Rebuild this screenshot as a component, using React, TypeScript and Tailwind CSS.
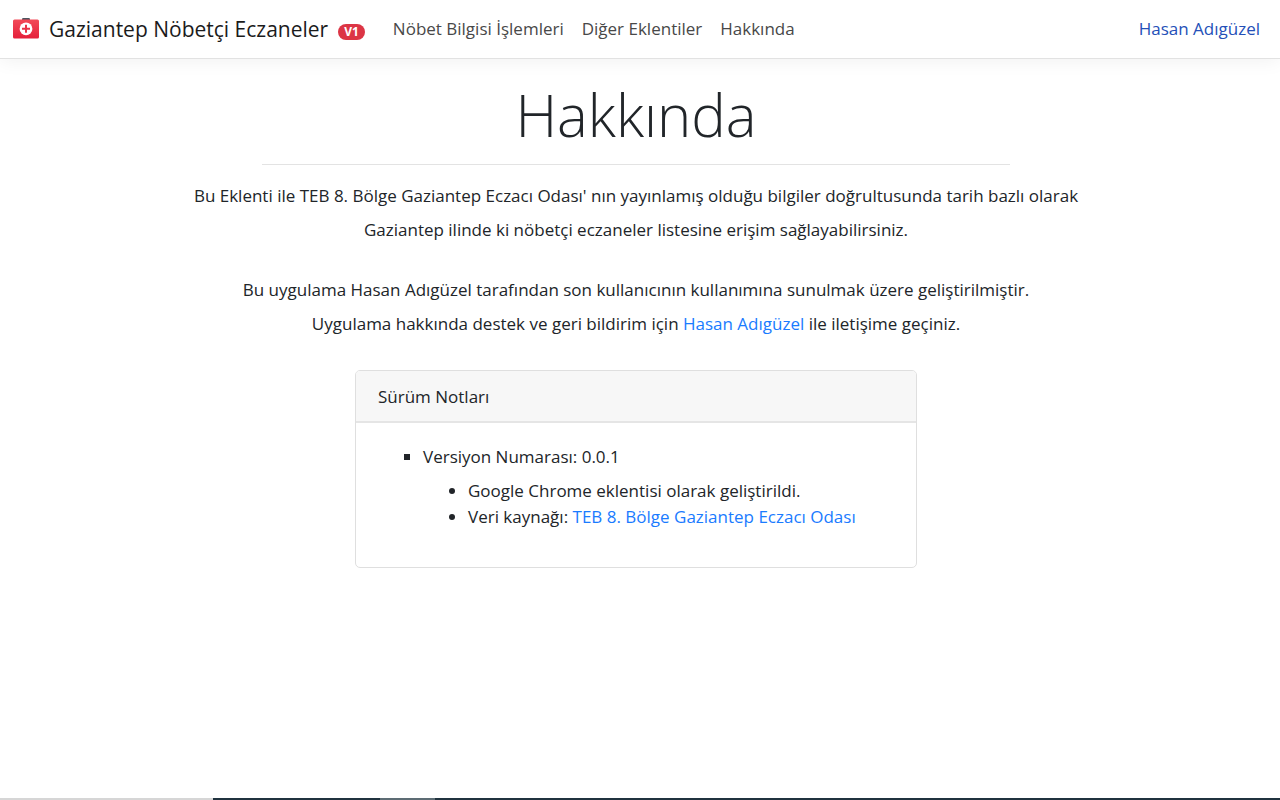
const NAV_LINKS = ['Nöbet Bilgisi İşlemleri', 'Diğer Eklentiler', 'Hakkında'];

const RELEASE = {
  version: '0.0.1',
  source: 'TEB 8. Bölge Gaziantep Eczacı Odası',
};

function FirstAidIcon() {
  return (
    <svg className="-mt-1 h-6 w-7 shrink-0" viewBox="0 0 28 24" aria-hidden="true">
      <defs>
        <linearGradient id="case" x1="0" y1="0" x2="0" y2="1">
          <stop offset="0" stopColor="#f24a58" />
          <stop offset="1" stopColor="#e5203a" />
        </linearGradient>
      </defs>
      <path d="M10 4.5V3.2Q10 2 11.2 2h5.6Q18 2 18 3.2v1.3z" fill="#4d5560" />
      <rect x="1" y="3.5" width="26" height="19" rx="1.5" fill="url(#case)" />
      <circle cx="14" cy="12.8" r="6.4" fill="#fff" />
      <path d="M14 8.8v8M10 12.8h8" stroke="#e93448" strokeWidth="2" />
    </svg>
  );
}

function Navbar() {
  return (
    <nav className="flex h-[59px] items-center border-b border-[#e2e2e2] bg-white pr-5 pl-3 shadow-[0_2px_18px_rgba(0,0,0,0.06)]">
      <a href="#" className="flex items-center pt-[2px] text-[21px] text-[#1b1b1b]">
        <FirstAidIcon />
        <span className="ml-[9px]">Gaziantep Nöbetçi Eczaneler</span>
        <span className="mt-1 ml-[10px] rounded-full bg-[#dc3545] px-[6px] text-[12px] leading-4 font-bold text-white">
          V1
        </span>
      </a>
      <div className="ml-7 flex gap-[18px] text-[#484848]">
        {NAV_LINKS.map(link => (
          <a key={link} href="#">{link}</a>
        ))}
      </div>
      <a href="#" className="ml-auto text-[#2450b8]">Hasan Adıgüzel</a>
    </nav>
  );
}

function ReleaseNotes() {
  return (
    <section className="mx-auto mt-[29px] w-full max-w-[562px] rounded-[5px] border border-[#dfdfdf] text-left">
      <h2 className="rounded-t-[4px] border-b-2 border-[#e5e5e5] bg-[#f7f7f7] px-[22px] pt-[13px] pb-[11px] leading-[26px]">
        Sürüm Notları
      </h2>
      <ul className="list-[square] pt-[17px] pr-6 pb-[37px] pl-[67px] leading-[34px]">
        <li>
          Versiyon Numarası: {RELEASE.version}
          <ul className="mt-1 list-disc pl-[45px] leading-[26px]">
            <li>Google Chrome eklentisi olarak geliştirildi.</li>
            <li>
              Veri kaynağı: <a href="#" className="text-[#1a7bff]">{RELEASE.source}</a>
            </li>
          </ul>
        </li>
      </ul>
    </section>
  );
}

export default function App() {
  return (
    <div className="flex min-h-screen flex-col bg-white font-['Open_Sans','Noto_Sans',sans-serif] text-[17px] text-[#212529]">
      <Navbar />
      <main className="mx-auto w-full max-w-[1024px] grow pr-2 text-center">
        <h1 className="pt-5 text-[58px] leading-[72px] font-light">Hakkında</h1>
        <hr className="mx-auto mt-[13px] max-w-[748px] border-[#e3e3e3]" />
        <p className="mt-[14px] leading-[34px]">
          Bu Eklenti ile TEB 8. Bölge Gaziantep Eczacı Odası' nın yayınlamış olduğu bilgiler doğrultusunda tarih bazlı olarak
          <br />
          Gaziantep ilinde ki nöbetçi eczaneler listesine erişim sağlayabilirsiniz.
        </p>
        <p className="mt-[26px] leading-[34px]">
          Bu uygulama Hasan Adıgüzel tarafından son kullanıcının kullanımına sunulmak üzere geliştirilmiştir.
          <br />
          Uygulama hakkında destek ve geri bildirim için <a href="#" className="text-[#1a7bff]">Hasan Adıgüzel</a> ile iletişime geçiniz.
        </p>
        <ReleaseNotes />
      </main>
      <footer className="flex h-[2px]">
        <div className="w-1/6 bg-[#d6d6d6]" />
        <div className="w-[13%] bg-[#20333f]" />
        <div className="w-[55px] bg-[#5d6c74]" />
        <div className="grow bg-[#20333f]" />
      </footer>
    </div>
  );
}
